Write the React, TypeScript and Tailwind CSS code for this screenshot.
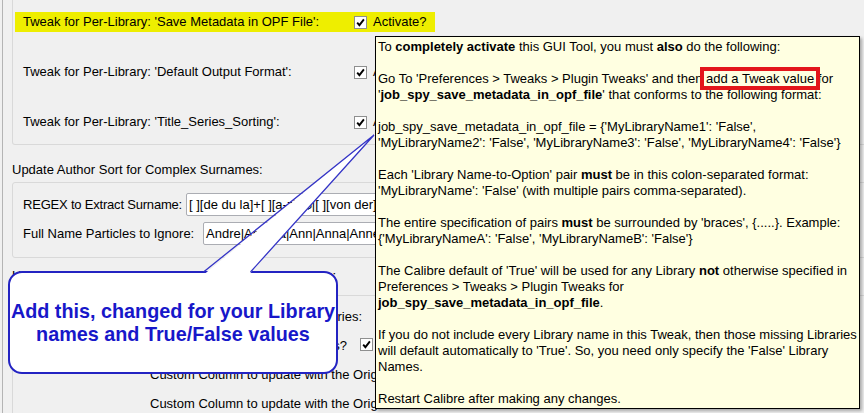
import React from "react";

function Check() {
  return (
    <span className="inline-flex h-[13px] w-[13px] shrink-0 items-center justify-center border border-[#8e8f8f] bg-white">
      <svg viewBox="0 0 11 11" className="h-[11px] w-[11px]">
        <path d="M2.2 5.6 L4.4 8.2 L8.9 2.4" fill="none" stroke="#000" strokeWidth="1.9" />
      </svg>
    </span>
  );
}

function TweakRow({ label, highlight }: { label: string; highlight?: boolean }) {
  return (
    <div
      className={
        highlight
          ? "flex h-[20px] w-[420px] items-center bg-[#eeee00] pl-[8px]"
          : "flex h-[20px] w-[420px] items-center pl-[8px]"
      }
    >
      <span className="w-[331px] shrink-0 whitespace-nowrap">{label}</span>
      <Check />
      <span className="ml-[6px] whitespace-nowrap">Activate?</span>
    </div>
  );
}

function Field({ label, labelWidth, value }: { label: string; labelWidth: string; value: string }) {
  return (
    <div className="flex h-[23px] items-center">
      <span className={`${labelWidth} shrink-0 whitespace-nowrap`}>{label}</span>
      <div className="flex h-[23px] w-[420px] items-center overflow-hidden whitespace-nowrap rounded-[2px] border border-[#abadb3] bg-white px-[2px]">
        {value}
      </div>
    </div>
  );
}

const lines: React.ReactNode[] = [
  <>
    To <b>completely activate</b> this GUI Tool, you must <b>also</b> do the following:
  </>,
  null,
  <>
    Go To 'Preferences &gt; Tweaks &gt; Plugin Tweaks' and then{" "}
    <span className="relative">
      add a Tweak value
      <span className="absolute -bottom-[4px] -left-[6px] -right-[6px] -top-[4px] border-4 border-[#e3161b]" />
    </span>{" "}
    for
  </>,
  <>
    '<b>job_spy_save_metadata_in_opf_file</b>' that conforms to the following format:
  </>,
  null,
  <>job_spy_save_metadata_in_opf_file = {"{"}'MyLibraryName1': 'False',</>,
  <>'MyLibraryName2': 'False', 'MyLibraryName3': 'False', 'MyLibraryName4': 'False'{"}"}</>,
  null,
  <>
    Each 'Library Name-to-Option' pair <b>must</b> be in this colon-separated format:
  </>,
  <>'MyLibraryName': 'False' (with multiple pairs comma-separated).</>,
  null,
  <>
    The entire specification of pairs <b>must</b> be surrounded by 'braces', {"{.....}"}. Example:
  </>,
  <>{"{"}'MyLibraryNameA': 'False', 'MyLibraryNameB': 'False'{"}"}</>,
  null,
  <>
    The Calibre default of 'True' will be used for any Library <b>not</b> otherwise specified in
  </>,
  <>Preferences &gt; Tweaks &gt; Plugin Tweaks for</>,
  <>
    <b>job_spy_save_metadata_in_opf_file</b>.
  </>,
  null,
  <>If you do not include every Library name in this Tweak, then those missing Libraries</>,
  <>will default automatically to 'True'. So, you need only specify the 'False' Library</>,
  <>Names.</>,
  null,
  <>Restart Calibre after making any changes.</>,
];

export default function App() {
  return (
    <div className="relative h-[413px] w-[864px] overflow-hidden bg-[#f0f0f0] font-['Liberation_Sans',Arial,sans-serif] text-[13px] leading-[16px] text-black">
      <div className="ml-[2px] h-full border-l border-[#b4b4b4] pl-[9px]">
        {/* per-library tweaks */}
        <div className="flex w-[880px] flex-col gap-[30px] rounded-b-[3px] border-x border-b border-[#d9d9d9] px-[2px] pb-[12px] pt-[12px]">
          <TweakRow highlight label="Tweak for Per-Library: 'Save Metadata in OPF File':" />
          <TweakRow label="Tweak for Per-Library: 'Default Output Format':" />
          <TweakRow label="Tweak for Per-Library: 'Title_Series_Sorting':" />
        </div>

        <div className="mb-[4px] mt-[17px] h-[16px] whitespace-nowrap">Update Author Sort for Complex Surnames:</div>

        <div className="flex w-[880px] flex-col gap-[6px] rounded-[3px] border border-[#d9d9d9] pb-[12px] pl-[10px] pt-[10px]">
          <Field label="REGEX to Extract Surname:" labelWidth="w-[163px] tracking-[-0.2px]" value="[ ][de du la]+[ ][a-z]+$|[ ][von der]+[ ][a-z]+$" />
          <Field label="Full Name Particles to Ignore:" labelWidth="w-[180px]" value="Andre|Andrea|Ann|Anna|Anne|Annie|Jean|Marie" />
        </div>

        <div className="mb-[11px] mt-[10px] h-[16px] whitespace-nowrap">Update Custom Columns with Original Metadata Values:</div>

        <div className="flex w-[880px] flex-col gap-[9px] rounded-t-[3px] border-x border-t border-[#d9d9d9] pl-[10px] pt-[11px]">
          <div className="flex h-[20px] items-center">
            <span className="w-[339px] whitespace-nowrap text-right">Update Original Values for All Libraries:</span>
          </div>
          <div className="flex h-[20px] items-center">
            <span className="w-[324px] whitespace-nowrap text-right">Preserve Original Values in Custom Columns?</span>
            <span className="ml-[13px]">
              <Check />
            </span>
          </div>
          <div className="flex h-[20px] items-center whitespace-nowrap pl-[127px]">Custom Column to update with the Original Title:</div>
          <div className="flex h-[20px] items-center whitespace-nowrap pl-[127px]">Custom Column to update with the Original Authors:</div>
        </div>
      </div>

      {/* callout balloon */}
      <div className="absolute left-[8px] top-[271px] z-10 flex h-[103px] w-[330px] items-center justify-center rounded-[14px] border-2 border-[#2323c2] bg-white">
        <p className="whitespace-nowrap text-center font-['Liberation_Sans',Arial,sans-serif] text-[19.8px] font-bold leading-[23px] text-[#1717c9]">
          Add this, changed for your Library
          <br />
          names and True/False values
        </p>
      </div>
      <svg className="pointer-events-none absolute left-0 top-0 z-20 h-[413px] w-[864px]" viewBox="0 0 864 413">
        <polygon points="204.5,274 374,135 249.5,274" fill="#fff" />
        <polyline points="203.5,272 374,135 250.5,272" fill="none" stroke="#3434c6" strokeWidth="1.3" />
      </svg>

      {/* tooltip */}
      <div className="absolute left-[375px] top-[36px] z-30 h-[373px] w-[485px] border border-black bg-[#ffffe1] pl-[2px] pt-[2px] shadow-[2px_2px_3px_rgba(0,0,0,0.3)]">
        {lines.map((line, i) => (
          <div key={i} className="h-[16px] whitespace-nowrap">
            {line}
          </div>
        ))}
      </div>
    </div>
  );
}
